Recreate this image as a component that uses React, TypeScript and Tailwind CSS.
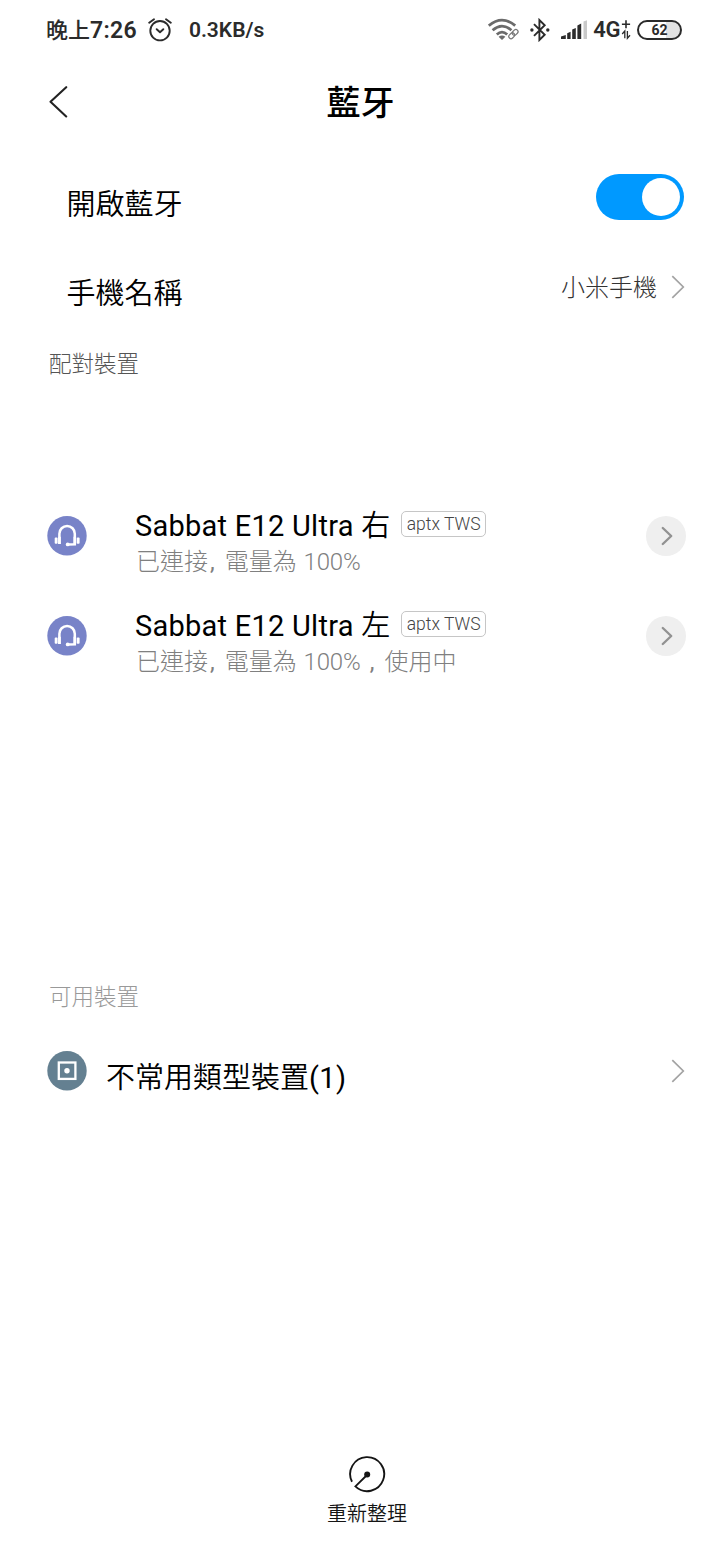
import React from "react";

const cjk = "font-['Noto_Sans_CJK_TC',sans-serif]";
const mixed = "font-[Roboto,'Noto_Sans_CJK_TC',sans-serif]";

function StatusBar() {
  return (
    <header className={`flex h-[60px] items-center pl-[46px] pr-[38px] text-[#2b2b2b] ${mixed}`}>
      <div className="flex h-[60px] items-center whitespace-nowrap">
        <span className="pt-px text-[22px] font-medium leading-[60px]">晚上</span>
        <span className="pt-px text-[23px] font-semibold leading-[60px] tracking-[0.3px]">7:26</span>
      </div>
      <svg className="ml-[11px] h-6 w-6" viewBox="0 0 24 24" fill="none" stroke="#2b2b2b" strokeWidth="1.9" strokeLinecap="round" strokeLinejoin="round">
        <circle cx="12" cy="12.7" r="9.7" />
        <path d="M1.2 4.8 6 1.2M22.8 4.8 18 1.2M8.7 11.2l3.3 3 3.3-3" />
      </svg>
      <span className="ml-[17px] whitespace-nowrap text-[21px] font-semibold leading-[60px]">0.3KB/s</span>
      <div className="ml-auto flex items-center">
        <svg className="h-6 w-[32px]" viewBox="0 0 32 24" fill="none">
          <g stroke="#6b6b6b" strokeWidth="2.8">
            <path d="M.8 7.6Q14 -3.4 27.2 7.6" />
            <path d="M4.6 12.2Q14 4 23.4 12.2" />
            <path d="M8.8 16.5Q14 11.8 19.2 16.5" />
          </g>
          <path d="M10.6 18.8Q14 16 17.4 18.8L14 22Z" fill="#6b6b6b" />
          <g transform="rotate(-45 25.5 16)" stroke="#777" strokeWidth="1.2">
            <rect x="19.8" y="13.8" width="6.4" height="4.4" rx="2.2" />
            <rect x="24.6" y="13.8" width="6.4" height="4.4" rx="2.2" />
          </g>
        </svg>
        <svg className="ml-[10px] h-6 w-5" viewBox="0 0 20 24" fill="none">
          <path d="M4 6.2 14.7 16.8 9.4 22V2L14.7 7.2 4 17.8" stroke="#2b2b2b" strokeWidth="1.9" />
          <circle cx="1.9" cy="12" r="1.7" fill="#2b2b2b" />
          <circle cx="17.8" cy="12" r="1.7" fill="#2b2b2b" />
        </svg>
        <svg className="ml-[11px] h-5 w-[27px]" viewBox="0 0 27 20" fill="#2b2b2b">
          <path d="M0 19V16.5L4.8 15V19ZM6.2 19V13.3L9.6 11.8V19ZM11.2 19V9.5L14.8 8V19ZM16.4 19V5.5L20.2 3.5V19Z" />
          <path d="M22.5 19V1.5L26 .3V19Z" fill="#c9c9c9" />
        </svg>
        <span className="ml-[5px] text-[22px] font-semibold leading-[60px] tracking-[-0.4px]">4G</span>
        <svg className="ml-[1px] h-5 w-[10px]" viewBox="0 0 10 20" fill="none" stroke="#2b2b2b" strokeWidth="1.6">
          <path d="M5 .2V8.2M.9 4.2H9.1" />
          <path d="M3.8 18.2V11L1.2 14M6.4 11V18.2L9 15.2" strokeWidth="1.3" />
        </svg>
        <div className="-mt-px ml-[6px] flex h-[20px] w-[45px] items-center justify-center rounded-full border-2 border-[#2b2b2b] bg-linear-to-r from-white from-65% to-[#e2e2e2] to-65%">
          <span className="text-[14px] font-bold leading-none">62</span>
        </div>
      </div>
    </header>
  );
}

function Chevron() {
  return (
    <svg className="h-[24px] w-[14px]" viewBox="0 0 14 24" fill="none" stroke="#a3a3a3" strokeWidth="1.7">
      <path d="M1.3 1.2 12.3 12 1.3 22.8" />
    </svg>
  );
}

function Headset() {
  return (
    <svg className="h-10 w-10" viewBox="0 0 40 40" fill="none">
      <circle cx="20" cy="19.7" r="19.7" fill="#7883c8" />
      <path d="M12.4 28V17.7a7.7 7.7 0 0 1 15.4 0V28.2L20.7 28.6" stroke="#fff" strokeWidth="2.5" />
      <path d="M11.2 20.8h2.6v7.2h-2.6zM26.5 20.8h2.6v7.2h-2.6z" fill="#fff" />
      <rect x="7.7" y="21.5" width="2.9" height="6.2" rx=".9" fill="#fff" />
      <rect x="29.7" y="21.5" width="2.9" height="6.2" rx=".9" fill="#fff" />
      <circle cx="20.7" cy="28.4" r="1.9" fill="#fff" />
    </svg>
  );
}

function Device({ side, suffix }: { side: string; suffix?: string }) {
  return (
    <div className="flex h-[100px] items-center pl-[47px] pr-[34px]">
      <Headset />
      <div className="ml-[48px] flex h-[78px] flex-col pt-[11px]">
        <div className={`flex h-9 items-center ${mixed}`}>
          <span className="whitespace-pre text-[29px] leading-9 tracking-[0.25px] text-black">Sabbat E12 Ultra </span>
          <span className={`-mt-[6px] text-[29px] font-[350] leading-9 text-black ${cjk}`}>{side}</span>
          <span className="-mt-[4px] ml-[11px] flex h-[26px] w-[85px] items-center justify-center whitespace-nowrap rounded-[5px] border border-[#c6c6c6] text-[17.5px] font-[350] leading-6 text-[#444]">
            aptx TWS
          </span>
        </div>
        <div className={`ml-px flex h-9 items-center whitespace-pre text-[24px] leading-9 text-[#808080] ${mixed}`}>
          <span className="font-light">已連接</span>
          <span className="ml-[2px]">, </span>
          <span className="ml-[4px] font-light">電量為</span>
          <span className="ml-[1px] font-[350] tracking-[-0.1px]"> 100%</span>
          {suffix && (
            <>
              <span className="ml-[9px]">, </span>
              <span className="ml-[4px] font-light">{suffix}</span>
            </>
          )}
        </div>
      </div>
      <button className="ml-auto flex h-10 w-10 items-center justify-center rounded-full bg-[#efefef] pl-[2px]">
        <svg className="h-5 w-3" viewBox="0 0 12 20" fill="none" stroke="#929292" strokeWidth="2.4" strokeLinecap="round" strokeLinejoin="round">
          <path d="M1.8 2 10.2 10 1.8 18" />
        </svg>
      </button>
    </div>
  );
}

export default function App() {
  return (
    <main className={`flex h-[1560px] w-[720px] flex-col overflow-hidden bg-white ${cjk}`}>
      <StatusBar />
      <div className="grid h-[84px] grid-cols-[1fr_auto_1fr] items-center pl-[49px] pr-[48px]">
        <svg className="h-8 w-5" viewBox="0 0 20 32" fill="none" stroke="#222" strokeWidth="2.1" strokeLinecap="round" strokeLinejoin="round">
          <path d="M17.2 1.2 1.5 15.8 17.2 30.5" />
        </svg>
        <h1 className="-mt-[2px] text-[34px] font-medium leading-[84px] text-black">藍牙</h1>
      </div>
      <section className="flex h-[106px] items-center justify-between pl-[66.5px] pr-[36px]">
        <span className="pt-[9px] text-[29px] font-[350] leading-9 text-black">開啟藍牙</span>
        <button className="flex h-[46px] w-[88px] items-center justify-end rounded-full bg-[#0099ff] pr-[4px]">
          <span className="h-[38px] w-[38px] rounded-full bg-white" />
        </button>
      </section>
      <section className="flex h-[74px] items-center pl-[66.5px] pr-[35px]">
        <span className="pt-[8px] text-[29px] font-[350] leading-9 text-black">手機名稱</span>
        <span className="-mt-[2px] ml-auto mr-[14px] text-[24px] font-light leading-9 text-[#333]">小米手機</span>
        <Chevron />
      </section>
      <h2 className="h-[162px] pl-[49px] pt-[20px] text-[22.5px] font-light leading-[36px] text-[#555]">配對裝置</h2>
      <section className="flex h-[486px] flex-col">
        <Device side="右" />
        <Device side="左" suffix="使用中" />
      </section>
      <h2 className="h-[49px] pl-[49px] pt-[5px] text-[22.5px] font-light leading-[36px] text-[#999]">可用裝置</h2>
      <section className="flex h-[100px] items-center pl-[47px] pr-[35px]">
        <svg className="h-10 w-10" viewBox="0 0 40 40" fill="none">
          <circle cx="20" cy="19.7" r="19.7" fill="#648091" />
          <rect x="11.8" y="11.5" width="16.6" height="16.4" stroke="#fff" strokeWidth="2.3" />
          <circle cx="20" cy="19.7" r="2.7" fill="#fff" />
        </svg>
        <span className="ml-[19px] pt-[10px] text-[29px] font-[350] leading-9 text-black">
          不常用類型裝置<span className={`font-normal tracking-[0.4px] ${mixed}`}>(1)</span>
        </span>
        <span className="ml-auto">
          <Chevron />
        </span>
      </section>
      <footer className="mt-auto flex h-[106px] flex-col items-center pl-[14px]">
        <svg className="h-10 w-10" viewBox="0 0 40 40" fill="none" stroke="#151515" strokeWidth="1.9">
          <path d="M5 27.8A17 17 0 1 1 8.4 32.4L20 21" />
          <circle cx="20.2" cy="20.5" r="3" fill="#151515" stroke="none" />
        </svg>
        <span className="mt-[4px] text-[20px] font-[350] leading-[30px] text-[#151515]">重新整理</span>
      </footer>
    </main>
  );
}
